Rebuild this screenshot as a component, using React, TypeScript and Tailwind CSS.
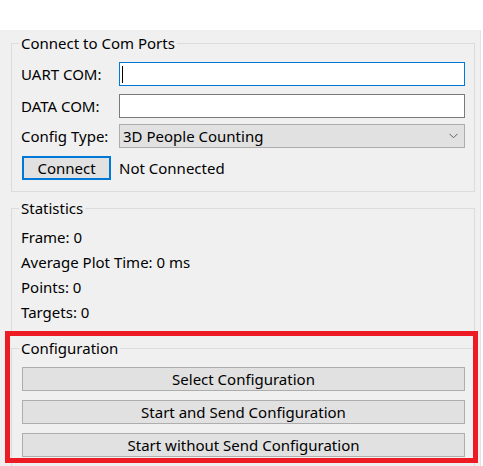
import React from "react";

const font = { fontFamily: '"Noto Sans", "Open Sans", Arial, sans-serif' };

function GroupTitle({ children }: { children: React.ReactNode }) {
  return (
    <div className="h-[20px] -mt-[11px] flex">
      <span className="ml-[7px] px-[2px] bg-[#f0f0f0] leading-[20px]">{children}</span>
    </div>
  );
}

function WinButton({ children }: { children: React.ReactNode }) {
  return (
    <div className="h-[24px] bg-[#e1e1e1] border border-[#adadad] flex items-center justify-center leading-none pt-[1px]">
      {children}
    </div>
  );
}

export default function App() {
  return (
    <div
      className="relative w-[483px] h-[466px] bg-white overflow-hidden text-[15px] text-black"
      style={font}
    >
      <div className="h-[30px]" />
      <div className="w-[481px] h-[436px] bg-[#f0f0f0] border-r border-[#e3e3e3] pl-[11px] pt-[13px] overflow-hidden">
        {/* Connect to Com Ports */}
        <div className="w-[464px] h-[149px] border border-[#dcdcdc] flex flex-col">
          <GroupTitle>Connect to Com Ports</GroupTitle>
          <div className="mt-[9px] pl-[9px] flex items-center h-[24px]">
            <span className="w-[98px] leading-none">UART COM:</span>
            <div className="w-[346px] h-[24px] bg-white border border-[#0078d7] flex items-center pl-[2px]">
              <div className="w-[1px] h-[17px] bg-black" />
            </div>
          </div>
          <div className="mt-[8px] pl-[9px] flex items-center h-[24px]">
            <span className="w-[98px] leading-none">DATA COM:</span>
            <div className="w-[346px] h-[24px] bg-white border border-[#7a7a7a]" />
          </div>
          <div className="mt-[6px] pl-[9px] flex items-center h-[24px]">
            <span className="w-[98px] leading-none">Config Type:</span>
            <div className="w-[346px] h-[24px] bg-[#e1e1e1] border border-[#adadad] flex items-center justify-between pl-[3px] pr-[6px]">
              <span className="leading-none">3D People Counting</span>
              <svg width="9" height="6" viewBox="0 0 9 6">
                <polyline points="0.5,0.8 4.5,4.8 8.5,0.8" fill="none" stroke="#606060" strokeWidth="1" />
              </svg>
            </div>
          </div>
          <div className="mt-[8px] pl-[10px] flex items-center h-[24px]">
            <div className="w-[89px] h-[24px] bg-[#e1e1e1] border-2 border-[#0078d7] flex items-center justify-center leading-none">
              Connect
            </div>
            <span className="ml-[8px] leading-none">Not Connected</span>
          </div>
        </div>

        {/* Statistics */}
        <div className="mt-[16px] w-[464px] h-[126px] border border-[#dcdcdc] flex flex-col">
          <GroupTitle>Statistics</GroupTitle>
          <div className="mt-[7px] pl-[9px] flex flex-col leading-[25px]">
            <span>Frame: 0</span>
            <span>Average Plot Time: 0 ms</span>
            <span>Points: 0</span>
            <span>Targets: 0</span>
          </div>
        </div>

        {/* Configuration */}
        <div className="mt-[14px] w-[464px] h-[130px] border border-[#dcdcdc] flex flex-col">
          <GroupTitle>Configuration</GroupTitle>
          <div className="mt-[9px] pl-[10px] pr-[9px] flex flex-col gap-[9px]">
            <WinButton>Select Configuration</WinButton>
            <WinButton>Start and Send Configuration</WinButton>
            <WinButton>Start without Send Configuration</WinButton>
          </div>
        </div>
      </div>

      {/* red highlight annotation */}
      <div className="absolute left-[5px] top-[331px] w-[473px] h-[132px] border-[5px] border-[#ed1c24] pointer-events-none" />
    </div>
  );
}
